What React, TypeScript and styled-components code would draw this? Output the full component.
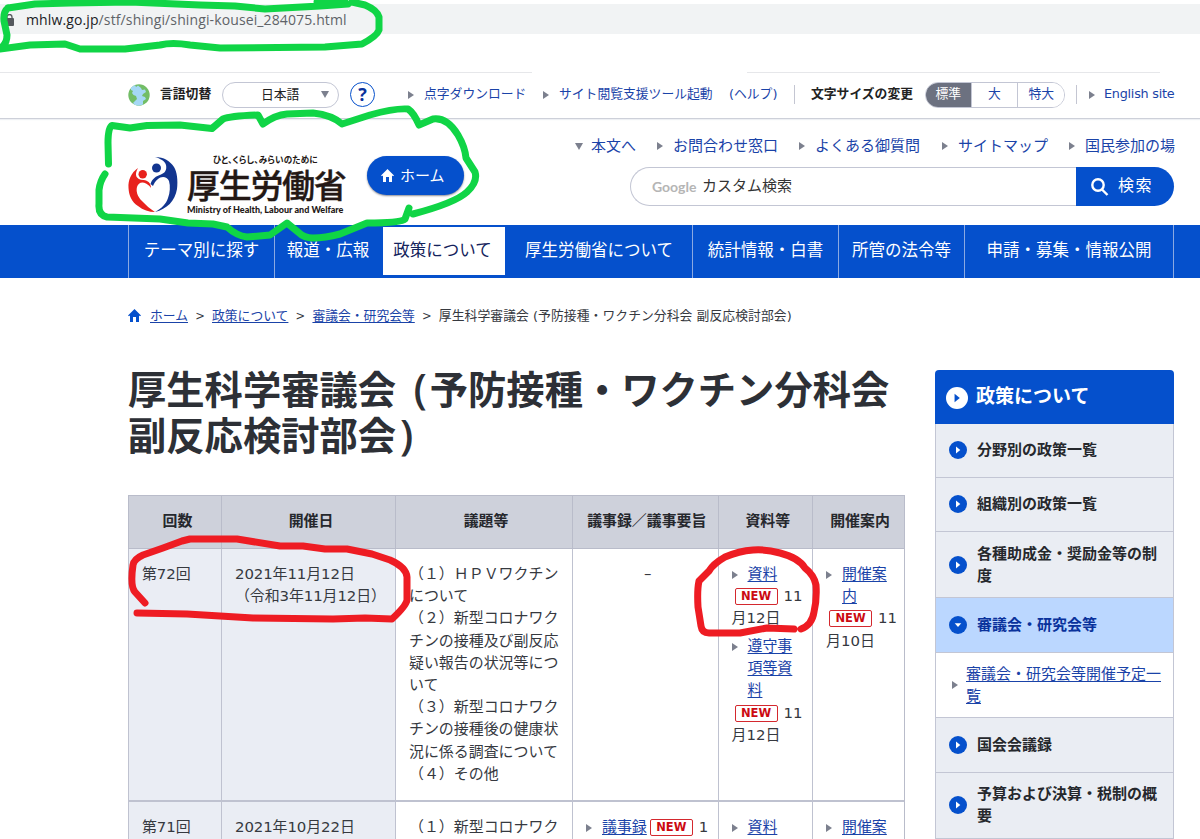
import React from 'react';
import styled, { createGlobalStyle, css } from 'styled-components';

const blue = '#0550cc';
const link = '#1a43a8';
const line = '#c3c6d4';

const GlobalStyle = createGlobalStyle`
  * { box-sizing: border-box; }
  html, body { margin: 0; padding: 0; }
  body {
    background: #fff;
    color: #36393f;
    font-family: 'DejaVu Sans', 'Noto Sans CJK JP', sans-serif;
    font-size: 15px;
    line-height: 22px;
    text-spacing-trim: space-all;
    overflow: hidden;
  }
`;

const Page = styled.div`
  position: relative;
  width: 1200px;
  height: 839px;
  overflow: hidden;
`;

/* ---------- address bar ---------- */
const BrowserChrome = styled.div`
  height: 72px;
  padding-top: 4px;
`;
const AddressBar = styled.div`
  display: flex;
  align-items: center;
  height: 30px;
  padding: 2px 0 0 5px;
  background: #f1f3f4;
  font-family: 'Open Sans', 'Noto Sans', sans-serif;
  font-size: 14px;
  color: #5f6368;
  svg { margin-right: 12px; }
`;
const Url = styled.span`
  letter-spacing: 0.12px;
  white-space: nowrap;
  b { font-weight: 400; color: #202124; }
`;
const ChromeEdge = styled.div`
  display: flex;
  justify-content: space-between;
  width: 1160px;
  height: 1px;
`;
const EdgeLine = styled.i<{ $w: number }>`
  width: ${p => p.$w}px;
  background: #e6e7ea;
`;

/* ---------- utility bar ---------- */
const UtilityBar = styled.div`
  display: flex;
  align-items: center;
  height: 46px;
  padding: 0 0 2px 128px;
  border-bottom: 1px solid #cdd0d9;
  box-shadow: 0 1px 1px #eef0f4;
  font-size: 12.8px;
  white-space: nowrap;
`;
const Slot = styled.div<{ $w: number; $bold?: boolean; $link?: boolean; $tight?: boolean }>`
  flex: none;
  width: ${p => p.$w}px;
  height: 26px;
  line-height: 26px;
  margin-top: -2px;
  font-weight: ${p => (p.$bold ? 700 : 400)};
  letter-spacing: ${p => (p.$tight ? '-0.25px' : 'normal')};
  color: ${p => (p.$link ? link : '#222')};
`;
const LanguageSelect = styled.div`
  display: flex;
  align-items: center;
  justify-content: space-between;
  width: 117px;
  height: 26px;
  padding: 0 9px 0 38px;
  border: 1px solid ${line};
  border-radius: 13px;
  color: #222;
`;
const HelpButton = styled.div`
  width: 25px;
  height: 25px;
  margin: 0 33px 0 11px;
  border: 1.5px solid ${blue};
  border-radius: 50%;
  color: #0a329c;
  font: 700 18px/22px 'Open Sans', sans-serif;
  text-align: center;
`;
const Divider = styled.i<{ $before: number; $after: number }>`
  flex: none;
  width: 1px;
  height: 19px;
  margin: 0 ${p => p.$after}px 0 ${p => p.$before}px;
  background: #c4c6d2;
`;
const SizeSwitch = styled.div`
  display: flex;
  width: 140px;
  height: 26px;
  border: 1px solid ${line};
  border-radius: 13px;
  overflow: hidden;
`;
const SizeOption = styled.div<{ $w: number; $on?: boolean }>`
  width: ${p => p.$w}px;
  line-height: 22px;
  text-align: center;
  color: ${p => (p.$on ? '#fff' : link)};
  background: ${p => (p.$on ? '#6c7180' : '#fff')};
  & + & { border-left: 1px solid ${line}; }
`;

const Caret = styled.i<{ $down?: boolean; $gap?: number }>`
  flex: none;
  display: inline-block;
  width: 0;
  height: 0;
  margin-right: ${p => p.$gap ?? 0}px;
  ${p =>
    p.$down
      ? css`border: 4px solid transparent; border-top: 7px solid #7c808e; border-bottom: 0;`
      : css`border: 4px solid transparent; border-left: 6px solid #7c808e; border-right: 0;`}
`;

/* ---------- masthead ---------- */
const Masthead = styled.header`
  display: flex;
  height: 106px;
  padding-left: 128px;
`;
const Logo = styled.div`
  display: flex;
  width: 239px;
  padding-top: 36px;
`;
const LogoWords = styled.div`
  width: 160px;
  margin-left: 9px;
  color: #231815;
  font-weight: 700;
  white-space: nowrap;
`;
const Motto = styled.div`
  height: 9px;
  margin-left: 26px;
  font: 700 8.6px/9px 'Noto Sans CJK JP', sans-serif;
  font-feature-settings: 'palt';
  letter-spacing: 0.15px;
`;
const MinistryName = styled.div`
  height: 39px;
  padding-top: 1px;
  font: 500 33px/38px 'Noto Sans CJK JP', sans-serif;
  -webkit-text-stroke: 0.4px #231815;
  letter-spacing: -1.3px;
`;
const MinistryEnglish = styled.div`
  padding-top: 1px;
  font: 900 9px/12px Lato, sans-serif;
`;
const HomeButton = styled.div`
  display: flex;
  align-items: center;
  width: 97px;
  height: 39px;
  margin-top: 37px;
  padding-left: 14px;
  gap: 6px;
  border-radius: 20px;
  background: ${blue};
  box-shadow: 0 1px 2px #8c8c94;
  color: #fff;
  span { height: 22px; }
`;
const MastheadRight = styled.div`
  margin-left: auto;
  width: 634px;
`;
const QuickLinks = styled.nav`
  display: flex;
  align-items: center;
  height: 22px;
  margin-top: 16px;
  padding-left: 9px;
  color: ${link};
  white-space: nowrap;
`;
const QuickLink = styled.span<{ $next: number }>`
  margin-right: ${p => p.$next}px;
`;
const Search = styled.div`
  display: flex;
  width: 544px;
  height: 39px;
  margin: 10px 0 0 64px;
`;
const SearchField = styled.div`
  display: flex;
  width: 446px;
  padding-left: 21px;
  border: 1px solid ${line};
  border-right: 0;
  border-radius: 20px 0 0 20px;
  line-height: 36px;
  color: #333;
`;
const GoogleMark = styled.span`
  width: 50px;
  color: #b5b5b5;
  font: 700 14px/38px Lato, sans-serif;
`;
const SearchButton = styled.div`
  display: flex;
  align-items: center;
  width: 98px;
  padding-left: 15px;
  gap: 9px;
  border-radius: 0 20px 20px 0;
  background: ${blue};
  color: #fff;
  font-size: 16px;
  letter-spacing: 1.5px;
  span { height: 23px; }
`;

/* ---------- global navigation ---------- */
const GlobalNav = styled.nav`
  display: flex;
  height: 53px;
  padding-left: 128px;
  background: ${blue};
`;
const NavItem = styled.div<{ $w: number; $active?: boolean; $plain?: boolean }>`
  width: ${p => p.$w}px;
  border-left: 1px solid ${p => (p.$plain ? blue : '#8ba9e2')};
  line-height: 51px;
  font-size: 16.5px;
  text-align: center;
  white-space: nowrap;
  color: #fff;
  ${p =>
    p.$active &&
    css`
      border: 2px solid ${blue};
      border-width: 2px 0 3px 2px;
      background: #fff;
      color: #14235c;
      line-height: 47px;
      padding-right: 3px;
    `}
  &:last-child { border-right: 1px solid #8ba9e2; }
`;

/* ---------- content ---------- */
const Breadcrumb = styled.div`
  display: flex;
  align-items: center;
  height: 22px;
  margin: 27px 0 0 128px;
  font-size: 12.8px;
  white-space: nowrap;
  svg { margin: -2px 9px 0 0; }
`;
const Crumb = styled.a`
  color: ${link};
  text-decoration: underline;
  text-underline-offset: 2px;
`;
const Chevron = styled.span`
  width: 24px;
  text-align: center;
  font-size: 11.5px;
`;
const CurrentCrumb = styled.span`
  letter-spacing: 0.07px;
`;
const Columns = styled.div`
  display: flex;
  align-items: flex-start;
  padding-left: 128px;
`;
const Main = styled.main`
  width: 777px;
  padding-top: 41px;
`;
const Title = styled.h1`
  margin: 0 0 35px;
  font-size: 38.3px;
  line-height: 46px;
  font-weight: 700;
  color: #2d3036;
  white-space: nowrap;
`;
const Paren = styled.span`
  margin: 0 3px 0 4px;
  font-family: 'Open Sans', sans-serif;
  font-size: 42px;
  line-height: 30px;
  font-weight: 600;
`;
const Table = styled.div`
  display: grid;
  grid-template-columns: 93px 174px 177px 145.5px 94.5px 92px;
  width: 777px;
  border-top: 1px solid #b9bcca;
  border-right: 1px solid #b9bcca;
`;
const HeadCell = styled.div<{ $shift?: number }>`
  height: 53px;
  padding-left: ${p => p.$shift ?? 5}px;
  border-left: 1px solid #b9bcca;
  border-bottom: 1px solid #b9bcca;
  background: #ced1db;
  line-height: 50px;
  font-size: 14.9px;
  font-weight: 700;
  color: #26282d;
  text-align: center;
  white-space: nowrap;
`;
const Cell = styled.div<{ $shade?: boolean; $center?: boolean }>`
  height: 253px;
  padding: 14px 0 0 13px;
  border-left: ${p => (p.$shade ? 1 : 1.5)}px solid #bfc2d0;
  border-bottom: 2px solid #bfc2d0;
  background: ${p => (p.$shade ? '#eaedf4' : '#fff')};
  font-size: 14.95px;
  line-height: 22.2px;
  white-space: nowrap;
  ${p => p.$shade && css`letter-spacing: -0.1px;`}
  ${p => p.$center && css`padding-left: 5px; text-align: center;`}
`;
const NewBadge = styled.span`
  display: inline-block;
  width: 43px;
  height: 17px;
  margin: 0 6px 0 3px;
  border: 1px solid #d4282e;
  border-radius: 2px;
  color: #cc0a12;
  font-size: 11.5px;
  line-height: 15px;
  font-weight: 700;
  text-align: center;
  vertical-align: 1px;
`;
const LinkBlock = styled.div<{ $gap?: number }>`
  margin-bottom: ${p => p.$gap ?? 0}px;
`;
const DocLine = styled.div`
  height: 22.2px;
`;

/* ---------- sidebar ---------- */
const Sidebar = styled.aside`
  width: 239px;
  margin: 43px 0 0 30px;
`;
const SideHeader = styled.div`
  display: flex;
  align-items: center;
  height: 54px;
  padding: 2px 0 0 11px;
  gap: 8px;
  border-radius: 4px 4px 0 0;
  background: ${blue};
  color: #fff;
  font-size: 19px;
  font-weight: 700;
  span { height: 26px; }
`;
const SideItem = styled.div<{ $h: number; $active?: boolean; $sub?: boolean }>`
  display: flex;
  align-items: center;
  height: ${p => p.$h}px;
  padding-left: ${p => (p.$sub ? 16 : 13)}px;
  gap: ${p => (p.$sub ? 8 : 10)}px;
  border: 1px solid ${line};
  border-top: 0;
  background: ${p => (p.$active ? '#bbd7ff' : p.$sub ? '#fff' : '#eaedf3')};
  color: ${p => (p.$active ? '#0a329c' : p.$sub ? link : '#26282d')};
  font-size: 15px;
  font-weight: ${p => (p.$sub ? 400 : 700)};
  text-decoration: ${p => (p.$sub ? 'underline' : 'none')};
  text-underline-offset: 2px;
  white-space: nowrap;
`;

const Annotations = styled.svg`
  position: absolute;
  left: 0;
  top: 0;
  pointer-events: none;
`;

const HomeIcon = ({ color, size = 13 }: { color: string; size?: number }) => (
  <svg width={size} height={size} viewBox="0 0 13 13" fill={color}>
    <path d="M6.5 0 13 6.4 12 7.3 11 6.6V13H8V8H5v5H2V6.6L1 7.3 0 6.4Z" />
  </svg>
);

const CircleIcon = styled.svg`
  flex: none;
`;
const CircleArrow = ({ size = 18, fill = blue, mark = '#fff', down = false }) => (
  <CircleIcon width={size} height={size} viewBox="0 0 18 18">
    <circle cx="9" cy="9" r="9" fill={fill} />
    <path d={down ? 'M5.7 7.3h6.6L9 11Z' : 'M7 5.500v7L11.300 9Z'} fill={mark} />
  </CircleIcon>
);

const GlobeIcon = styled.svg`
  flex: none;
  margin-right: 10px;
`;
const Globe = () => (
  <GlobeIcon width="22" height="22" viewBox="0 0 22 22">
    <circle cx="11" cy="11" r="10.7" fill="#72bd66" />
    <path d="M3 3.500 7 1 8 3 10 1.500 13 4 14 6 17 5.500 18 8 15 10 14 12 17 13 18 15 15 17 15 20.500 11 21.700 7 21 5 19 7 17 9 15 8 12 5.500 11 4 9 5 7 3 6Z" fill="#a5d8f5" />
  </GlobeIcon>
);

const Emblem = () => (
  <svg width="50" height="58" viewBox="0 0 50 58">
    <path d="M27 2C36 2 42 6 46 12C49 17 50 25 49 34C47 46 39 54 27 57C34 53 38 49 40 43C42 38 42.500 31 41 26C39 21 33 21 30 24C27 26 26 29 25 31L22.500 29C24 24 28 21 33 19.500C37 18 39 15 38 10C37 6 32 3.500 27 2Z" fill="#12358f" />
    <circle cx="28.500" cy="13" r="4.500" fill="#12358f" />
    <path d="M10 13C3 18 0 25 .5 33C1 41 4 47 10 51C15 55 21 57 27 57C22 54 18 50 14 46C9 41 8 36 9 32C10 28 14 26 18 28.500C20 30 22 31 23 33C23 28 20 25.500 15.500 25C8 24.500 6 20 10 13Z" fill="#e8211d" />
    <circle cx="14.700" cy="19.300" r="4.200" fill="#e8211d" />
  </svg>
);

const quick: [string, number][] = [
  ['本文へ', 21],
  ['お問合わせ窓口', 21],
  ['よくある御質問', 22],
  ['サイトマップ', 21],
  ['国民参加の場', 0],
];

const nav: [string, number][] = [
  ['テーマ別に探す', 146],
  ['報道・広報', 107],
  ['政策について', 124],
  ['厚生労働省について', 187],
  ['統計情報・白書', 146],
  ['所管の法令等', 126],
  ['申請・募集・情報公開', 210],
];

const HiddenCaret = styled(Caret)`
  visibility: hidden;
`;

type DocProps = { lines: string[]; day?: string; rest?: string; gap?: number };

const Doc = ({ lines, day, rest, gap }: DocProps) => (
  <LinkBlock $gap={gap}>
    {lines.map((t, i) => (
      <DocLine key={t}>
        {i ? <HiddenCaret $gap={10} /> : <Caret $gap={10} />}
        <Crumb>{t}</Crumb>
      </DocLine>
    ))}
    {day && <DocLine><NewBadge>NEW</NewBadge>{day}</DocLine>}
    {rest && <DocLine>{rest}</DocLine>}
  </LinkBlock>
);

export default function App() {
  return (
    <Page>
      <GlobalStyle />
      <BrowserChrome>
        <AddressBar>
          <svg width="9" height="12" viewBox="0 0 9 12">
            <rect y="4" width="9" height="8" rx="1" fill="#55595e" />
            <path d="M2 5V3a2.500 2.500 0 0 1 5 0v2" fill="none" stroke="#55595e" strokeWidth="1.300" />
          </svg>
          <Url><b>mhlw.go.jp</b>/stf/shingi/shingi-kousei_284075.html</Url>
        </AddressBar>
      </BrowserChrome>
      <ChromeEdge><EdgeLine $w={532} /><EdgeLine $w={413} /></ChromeEdge>

      <UtilityBar>
        <Globe />
        <Slot $w={62} $bold>言語切替</Slot>
        <LanguageSelect>日本語<Caret $down /></LanguageSelect>
        <HelpButton>?</HelpButton>
        <Caret $gap={10} />
        <Slot $w={119} $link>点字ダウンロード</Slot>
        <Caret $gap={10} />
        <Slot $w={170} $link>サイト閲覧支援ツール起動</Slot>
        <Slot $w={49} $link>(ヘルプ)</Slot>
        <Divider $before={16} $after={16} />
        <Slot $w={114} $bold>文字サイズの変更</Slot>
        <SizeSwitch>
          <SizeOption $w={45} $on>標準</SizeOption>
          <SizeOption $w={47}>大</SizeOption>
          <SizeOption $w={47}>特大</SizeOption>
        </SizeSwitch>
        <Divider $before={11} $after={12} />
        <Caret $gap={9} />
        <Slot $w={80} $link $tight>English site</Slot>
      </UtilityBar>

      <Masthead>
        <Logo>
          <Emblem />
          <LogoWords>
            <Motto>ひと、くらし、みらいのために</Motto>
            <MinistryName>厚生労働省</MinistryName>
            <MinistryEnglish>Ministry of Health, Labour and Welfare</MinistryEnglish>
          </LogoWords>
        </Logo>
        <HomeButton><HomeIcon color="#fff" /><span>ホーム</span></HomeButton>
        <MastheadRight>
          <QuickLinks>
            {quick.map(([t, next], i) => (
              <React.Fragment key={t}>
                <Caret $down={i === 0} $gap={i === 0 ? 8 : 10} />
                <QuickLink $next={next}>{t}</QuickLink>
              </React.Fragment>
            ))}
          </QuickLinks>
          <Search>
            <SearchField><GoogleMark>Google</GoogleMark>カスタム検索</SearchField>
            <SearchButton>
              <svg width="18" height="18" viewBox="0 0 18 18" fill="none" stroke="#fff" strokeWidth="2.400">
                <circle cx="7" cy="7" r="5.700" /><path d="m11 11.500 5.500 5.500" />
              </svg>
              <span>検索</span>
            </SearchButton>
          </Search>
        </MastheadRight>
      </Masthead>

      <GlobalNav>
        {nav.map(([t, w], i) => <NavItem key={t} $w={w} $active={i === 2} $plain={i === 3}>{t}</NavItem>)}
      </GlobalNav>

      <Breadcrumb>
        <HomeIcon color={blue} />
        <Crumb>ホーム</Crumb><Chevron>&gt;</Chevron>
        <Crumb>政策について</Crumb><Chevron>&gt;</Chevron>
        <Crumb>審議会・研究会等</Crumb><Chevron>&gt;</Chevron>
        <CurrentCrumb>厚生科学審議会 (予防接種・ワクチン分科会 副反応検討部会)</CurrentCrumb>
      </Breadcrumb>

      <Columns>
        <Main>
          <Title>
            厚生科学審議会 <Paren>(</Paren>予防接種・ワクチン分科会<br />副反応検討部会<Paren>)</Paren>
          </Title>
          <Table>
            <HeadCell>回数</HeadCell>
            <HeadCell>開催日</HeadCell>
            <HeadCell $shift={4}>議題等</HeadCell>
            <HeadCell $shift={3}>議事録／議事要旨</HeadCell>
            <HeadCell>資料等</HeadCell>
            <HeadCell $shift={3}>開催案内</HeadCell>

            <Cell $shade>第72回</Cell>
            <Cell $shade>2021年11月12日<br />（令和3年11月12日）</Cell>
            <Cell>
              （１）ＨＰＶワクチン<br />について<br />（２）新型コロナワク<br />チンの接種及び副反応<br />
              疑い報告の状況等につ<br />いて<br />（３）新型コロナワク<br />チンの接種後の健康状<br />
              況に係る調査について<br />（４）その他
            </Cell>
            <Cell $center>–</Cell>
            <Cell>
              <Doc lines={['資料']} day="11" rest="月12日" gap={5.5} />
              <Doc lines={['遵守事', '項等資', '料']} day="11" rest="月12日" />
            </Cell>
            <Cell><Doc lines={['開催案', '内']} day="11" rest="月10日" /></Cell>

            <Cell $shade>第71回</Cell>
            <Cell $shade>2021年10月22日</Cell>
            <Cell>（１）新型コロナワク</Cell>
            <Cell><DocLine><Caret $gap={10} /><Crumb>議事録</Crumb><NewBadge>NEW</NewBadge>1</DocLine></Cell>
            <Cell><Doc lines={['資料']} /></Cell>
            <Cell><Doc lines={['開催案']} /></Cell>
          </Table>
        </Main>

        <Sidebar>
          <SideHeader><CircleArrow size={22} fill="#fff" mark={blue} /><span>政策について</span></SideHeader>
          <SideItem $h={53.5}><CircleArrow /><span>分野別の政策一覧</span></SideItem>
          <SideItem $h={54.5}><CircleArrow /><span>組織別の政策一覧</span></SideItem>
          <SideItem $h={66}><CircleArrow /><span>各種助成金・奨励金等の制<br />度</span></SideItem>
          <SideItem $h={55} $active><CircleArrow down /><span>審議会・研究会等</span></SideItem>
          <SideItem $h={65} $sub><Caret /><span>審議会・研究会等開催予定一<br />覧</span></SideItem>
          <SideItem $h={54.5}><CircleArrow /><span>国会会議録</span></SideItem>
          <SideItem $h={66}><CircleArrow /><span>予算および決算・税制の概<br />要</span></SideItem>
        </Sidebar>
      </Columns>

      <Annotations width="1200" height="839" fill="none" strokeWidth="7" strokeLinecap="round" strokeLinejoin="round">
        <g stroke="#10d546">
          <path d="M8 8 35 4 70 3 130 2 200 5 235 6 265 9 320 6 348 4M317 2H345M352 2 365 5Q377 10 379 17L379 30Q377 36 362 44L325 47 220 48 190 45Q172 42 160 45L125 49 80 49 65 44 30 45 0 49M8 8Q3 12 4 21L7 35Q7 42 3 46" />
          <path d="M108.500 164 108 143Q108 127 112 125.500L130 128 147 125.500 180 125 212 128.500 223 119Q230 116 258 115L263 124Q275 115 287 114L313 113Q332 115 342 124L370 115Q395 108 408 109 414 113 419 125L433 119Q447 117 458 135 465 147 466 158L475 172Q478 182 467 192 455 203 413 214M409 208 405 219Q401 223 367 223L340 234Q325 238 313 238 304 238 298 232L287 223 270 235 247 237Q237 236 227 227L213 224 188 223 160 219 107 217Q98 215 99 204L99 190Q100 181 105 174" />
        </g>
        <g stroke="#ee1c23">
          <path d="M145 603 135 592Q130 586 133 565 134 559 143 555L163 548 182 541 190 539 237 539 280 546 303 546 325 549 347 549 372 554 390 560Q406 567 407 577L407 600Q406 606 392 619L365 618 333 619 253 618 220 616 187 614 137 613" />
          <path d="M801 629Q812 625 814 612 817 600 816 585 814 575 805 568 799 558 780 553 766 549 753 550 739 551 725 557 713 564 709 571L699 581Q697 590 698 607L701 626Q702 633 709 633L740 633 767 628 794 629" />
        </g>
      </Annotations>
    </Page>
  );
}
